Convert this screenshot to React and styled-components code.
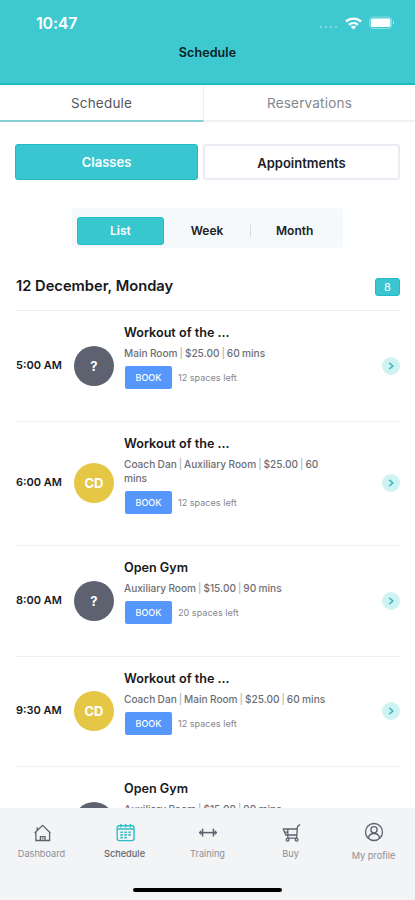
import React, { useState } from 'react';
import styled, { createGlobalStyle } from 'styled-components';

const GlobalStyle = createGlobalStyle`
  * {
    box-sizing: border-box;
  }
  body {
    margin: 0;
    background: #fff;
    font-family: Inter, 'Liberation Sans', sans-serif;
    color: #17181c;
  }
  button {
    font-family: inherit;
    border: none;
    padding: 0;
    cursor: pointer;
  }
`;

const Screen = styled.div`
  display: flex;
  flex-direction: column;
  width: 415px;
  height: 900px;
  overflow: hidden;
  background: #fff;
`;

const Header = styled.header`
  flex: none;
  height: 85px;
  background: #3ec8d0;
  border-bottom: 2px solid #20bcc4;
`;

const StatusBar = styled.div`
  display: flex;
  align-items: center;
  justify-content: space-between;
  height: 43px;
  padding: 3px 20px 0 36px;
`;

const Clock = styled.span`
  color: #fff;
  font-size: 16px;
  font-weight: 600;
  letter-spacing: -0.2px;
`;

const StatusIcons = styled.div`
  display: flex;
  align-items: center;
  gap: 7px;
`;

const PageTitle = styled.h1`
  margin: 0;
  padding-top: 1px;
  text-align: center;
  font-size: 12.5px;
  line-height: 18px;
  font-weight: 600;
  letter-spacing: 0.1px;
  color: #0b2023;
`;

const Tabs = styled.nav`
  flex: none;
  display: flex;
  height: 37px;
`;

const Tab = styled.button`
  width: ${(p) => (p.$active ? '204px' : '211px')};
  padding-top: 1px;
  background: #fff;
  color: ${(p) => (p.$active ? '#55575c' : '#85878c')};
  font-size: 13.5px;
  letter-spacing: 0.2px;
  border-right: ${(p) => (p.$active ? '1px solid #eceef1' : 'none')};
  border-bottom: 2px solid ${(p) => (p.$active ? '#85d0d5' : '#eff1f3')};
`;

const TypeSwitch = styled.div`
  flex: none;
  display: flex;
  gap: 5px;
  padding: 22px 15px 0;
`;

const TypeButton = styled.button`
  width: ${(p) => (p.$active ? '183px' : '197px')};
  height: 36px;
  padding-top: ${(p) => (p.$active ? '0' : '2px')};
  border: ${(p) => (p.$active ? '1px solid #20bac4' : '2px solid #ebebf4')};
  border-radius: 3px;
  background: ${(p) => (p.$active ? '#3ac6d0' : '#fff')};
  color: ${(p) => (p.$active ? '#fff' : '#202126')};
  font-size: 13px;
  font-weight: 600;
`;

const RangeSwitch = styled.div`
  flex: none;
  display: flex;
  align-items: center;
  align-self: center;
  width: 271px;
  height: 40px;
  margin-top: 28px;
  padding: 5px 5px 0;
  border-radius: 4px;
  background: #f5f9fb;
`;

const RangeButton = styled.button`
  width: 87px;
  height: 28px;
  border: ${(p) => (p.$active ? '1px solid #24bdc6' : 'none')};
  border-radius: 3px;
  background: ${(p) => (p.$active ? '#38c6cf' : 'transparent')};
  color: ${(p) => (p.$active ? '#fff' : '#202126')};
  font-size: 12px;
  font-weight: 600;
`;

const RangeDivider = styled.span`
  width: 1px;
  height: 13px;
  background: #d8dde2;
`;

const DayHeader = styled.div`
  flex: none;
  display: flex;
  align-items: center;
  justify-content: space-between;
  height: 49px;
  margin: 14px 15px 0 16px;
  border-bottom: 1px solid #e9eaec;
`;

const DayTitle = styled.h2`
  margin: 0;
  font-size: 14.7px;
  font-weight: 600;
`;

const DayCount = styled.span`
  display: flex;
  align-items: center;
  justify-content: center;
  width: 25px;
  height: 18px;
  margin-top: 2px;
  border: 1px solid #20bac4;
  border-radius: 3px;
  background: #3ac6d0;
  color: #fff;
  font-size: 11px;
`;

const ClassList = styled.main`
  flex: 1;
  min-height: 0;
  overflow: hidden;
  padding: 0 15px 0 16px;
`;

const ClassRow = styled.article`
  display: flex;
  align-items: center;
  height: ${(p) => (p.$tall ? '124.5px' : '110.5px')};
  border-bottom: 1px solid #eff0f1;
`;

const Time = styled.span`
  width: 58px;
  flex: none;
  font-size: 11px;
  line-height: 14px;
  padding-bottom: 2px;
  font-weight: 600;
  white-space: nowrap;
`;

const Avatar = styled.div`
  display: flex;
  align-items: center;
  justify-content: center;
  flex: none;
  width: 40px;
  height: 40px;
  border-radius: 50%;
  background: ${(p) => (p.$coach ? '#e6c645' : '#5e6170')};
  color: #fff;
  font-size: 13px;
  font-weight: 700;
`;

const Details = styled.div`
  align-self: flex-start;
  width: 210px;
  margin-left: 10px;
  padding-top: 13px;
`;

const ClassName = styled.h3`
  margin: 0;
  font-size: 12.6px;
  line-height: 17px;
  font-weight: 600;
`;

const Meta = styled.p`
  margin: 5px 0 6px;
  font-size: 10.1px;
  line-height: 14px;
  font-weight: 500;
  color: #6c6e74;
  word-spacing: -0.3px;
`;

const Bar = styled.span`
  margin: 0 2px;
  color: #a5a7ab;
  font-weight: 400;
`;

const Booking = styled.div`
  display: flex;
  align-items: center;
  gap: 6px;
  padding-left: 1px;
`;

const BookButton = styled.button`
  width: 47px;
  height: 23px;
  border-radius: 2px;
  background: #5597fc;
  color: #fff;
  font-size: 9px;
  font-weight: 500;
`;

const Spaces = styled.span`
  font-size: 9.1px;
  color: #85878c;
`;

const OpenButton = styled.button`
  display: flex;
  align-items: center;
  justify-content: center;
  width: 18px;
  height: 18px;
  margin-left: auto;
  border-radius: 50%;
  background: #cff3f2;
`;

const BottomBar = styled.footer`
  flex: none;
  display: flex;
  flex-direction: column;
  justify-content: space-between;
  align-items: center;
  height: 92px;
  padding-bottom: 8px;
  background: #f2f4f6;
`;

const NavItems = styled.nav`
  display: grid;
  grid-template-columns: repeat(5, 83px);
  align-items: start;
`;

const NavItem = styled.button`
  display: flex;
  flex-direction: column;
  align-items: center;
  gap: ${(p) => (p.$low ? '7px' : '5px')};
  padding-top: 13px;
  background: none;
  color: ${(p) => (p.$active ? '#63656b' : '#8d8f96')};
  font-size: 9.2px;
  line-height: 12px;
  font-weight: ${(p) => (p.$active ? 500 : 400)};
`;

const HomeIndicator = styled.div`
  width: 149px;
  height: 4px;
  border-radius: 2px;
  background: #000;
`;

const SignalIcon = () => (
  <svg width="20" height="14" viewBox="0 0 20 14" fill="#fff" opacity="0.35">
    <circle cx="3" cy="11" r="1.2" />
    <circle cx="8" cy="11" r="1.2" />
    <circle cx="13" cy="11" r="1.2" />
    <circle cx="18" cy="11" r="1.2" />
  </svg>
);

const WifiIcon = () => (
  <svg width="17" height="13" viewBox="0 0 17 13" fill="none" stroke="#fff" strokeWidth="2.4">
    <path d="M1 4.5C5.2 0.6 11.8 0.6 16 4.5" />
    <path d="M4 7.8C6.6 5.5 10.4 5.5 13 7.8" />
    <path d="M8.5 12.5L5.8 9.7C7.3 8.5 9.7 8.5 11.2 9.7Z" fill="#fff" stroke="none" />
  </svg>
);

const BatteryIcon = () => (
  <svg width="26" height="14" viewBox="0 0 26 14">
    <rect x="0.6" y="1.1" width="22" height="11.4" rx="3" fill="none" stroke="#fff" strokeOpacity="0.4" />
    <rect x="1.8" y="2.6" width="19.6" height="8.4" rx="1.6" fill="#fff" />
    <path d="M24 4.8C25.6 5.4 25.6 8.2 24 8.8Z" fill="#fff" opacity="0.6" />
  </svg>
);

const ArrowIcon = () => (
  <svg width="8" height="10" viewBox="0 0 8 10" fill="none" stroke="#3cbcc2" strokeWidth="1.6">
    <path d="M2.2 1.8L5.8 5L2.2 8.2" />
  </svg>
);

const navIconProps = {
  width: 22,
  height: 22,
  viewBox: '0 0 22 22',
  fill: 'none',
  stroke: '#5f616e',
  strokeWidth: 1.3,
};

const HomeIcon = () => (
  <svg {...navIconProps}>
    <path d="M3.6 12L11.6 4.4L19.4 12M4.9 11V19.5H18.6V11" />
    <path d="M6.2 9.4V6.2M9.4 19.5V15.6H14V19.5M11.2 17.5H12.4" />
  </svg>
);

const CalendarIcon = () => (
  <svg {...navIconProps} stroke="#2fbdc7" strokeWidth="1.4">
    <rect x="3.2" y="4.8" width="16.8" height="14.8" rx="2" />
    <path d="M3.2 8H20M6.8 3V6.4M11.6 3V6.4M16.4 3V6.4" />
    <path d="M6.4 11.2H17M6.4 13.9H17M6.4 16.6H13.6" strokeDasharray="2.4 1.6" strokeWidth="1.6" />
  </svg>
);

const TrainingIcon = () => (
  <svg {...navIconProps} strokeWidth="1.5">
    <path d="M2 11.6H20" />
    <path d="M5.6 7.8V15.4M3.6 9.8V13.4M16.4 7.8V15.4M18.4 9.8V13.4" />
  </svg>
);

const CartIcon = () => (
  <svg {...navIconProps}>
    <path d="M20 3.4L17.4 5.8L16.6 17.2M2.8 8H17M3.2 8L5.8 14H16.6M4.6 11.2H8M7.8 8V17.2M8 17.2H16.6" />
    <circle cx="7.6" cy="18.7" r="1.4" />
    <circle cx="16.6" cy="18.7" r="1.4" />
  </svg>
);

const ProfileIcon = () => (
  <svg {...navIconProps}>
    <circle cx="11" cy="11" r="8.5" />
    <circle cx="11" cy="8.8" r="3.1" />
    <path d="M5.5 17C6 13.8 8 12.5 11 12.5C14 12.5 16 13.8 16.5 17" />
  </svg>
);

const classes = [
  { id: 1, time: '5:00 AM', name: 'Workout of the ...', meta: ['Main Room', '$25.00', '60 mins'], spaces: 12 },
  { id: 2, time: '6:00 AM', coach: 'CD', name: 'Workout of the ...', meta: ['Coach Dan', 'Auxiliary Room', '$25.00', '60 mins'], spaces: 12, tall: true },
  { id: 3, time: '8:00 AM', name: 'Open Gym', meta: ['Auxiliary Room', '$15.00', '90 mins'], spaces: 20 },
  { id: 4, time: '9:30 AM', coach: 'CD', name: 'Workout of the ...', meta: ['Coach Dan', 'Main Room', '$25.00', '60 mins'], spaces: 12 },
  { id: 5, time: '10:00 AM', name: 'Open Gym', meta: ['Auxiliary Room', '$15.00', '90 mins'], spaces: 20 },
];

const navItems = [
  { label: 'Dashboard', Icon: HomeIcon },
  { label: 'Schedule', Icon: CalendarIcon },
  { label: 'Training', Icon: TrainingIcon },
  { label: 'Buy', Icon: CartIcon },
  { label: 'My profile', Icon: ProfileIcon, low: true },
];

const App = () => {
  const [tab, setTab] = useState('Schedule');
  const [type, setType] = useState('Classes');
  const [range, setRange] = useState('List');

  return (
    <Screen>
      <GlobalStyle />
      <Header>
        <StatusBar>
          <Clock>10:47</Clock>
          <StatusIcons>
            <SignalIcon />
            <WifiIcon />
            <BatteryIcon />
          </StatusIcons>
        </StatusBar>
        <PageTitle>Schedule</PageTitle>
      </Header>
      <Tabs>
        {['Schedule', 'Reservations'].map((label) => (
          <Tab key={label} $active={tab === label} onClick={() => setTab(label)}>
            {label}
          </Tab>
        ))}
      </Tabs>
      <TypeSwitch>
        {['Classes', 'Appointments'].map((label) => (
          <TypeButton key={label} $active={type === label} onClick={() => setType(label)}>
            {label}
          </TypeButton>
        ))}
      </TypeSwitch>
      <RangeSwitch>
        {['List', 'Week', 'Month'].map((label) => (
          <React.Fragment key={label}>
            {label === 'Month' && <RangeDivider />}
            <RangeButton $active={range === label} onClick={() => setRange(label)}>
              {label}
            </RangeButton>
          </React.Fragment>
        ))}
      </RangeSwitch>
      <DayHeader>
        <DayTitle>12 December, Monday</DayTitle>
        <DayCount>8</DayCount>
      </DayHeader>
      <ClassList>
        {classes.map((item) => (
          <ClassRow key={item.id} $tall={item.tall}>
            <Time>{item.time}</Time>
            <Avatar $coach={item.coach}>{item.coach || '?'}</Avatar>
            <Details>
              <ClassName>{item.name}</ClassName>
              <Meta>
                {item.meta.map((part, i) => (
                  <React.Fragment key={part}>
                    {i > 0 && <Bar>|</Bar>}
                    {part}
                  </React.Fragment>
                ))}
              </Meta>
              <Booking>
                <BookButton>BOOK</BookButton>
                <Spaces>{item.spaces} spaces left</Spaces>
              </Booking>
            </Details>
            <OpenButton aria-label="Open class">
              <ArrowIcon />
            </OpenButton>
          </ClassRow>
        ))}
      </ClassList>
      <BottomBar>
        <NavItems>
          {navItems.map(({ label, Icon, low }) => (
            <NavItem key={label} $active={label === 'Schedule'} $low={low}>
              <Icon />
              {label}
            </NavItem>
          ))}
        </NavItems>
        <HomeIndicator />
      </BottomBar>
    </Screen>
  );
};

export default App;
